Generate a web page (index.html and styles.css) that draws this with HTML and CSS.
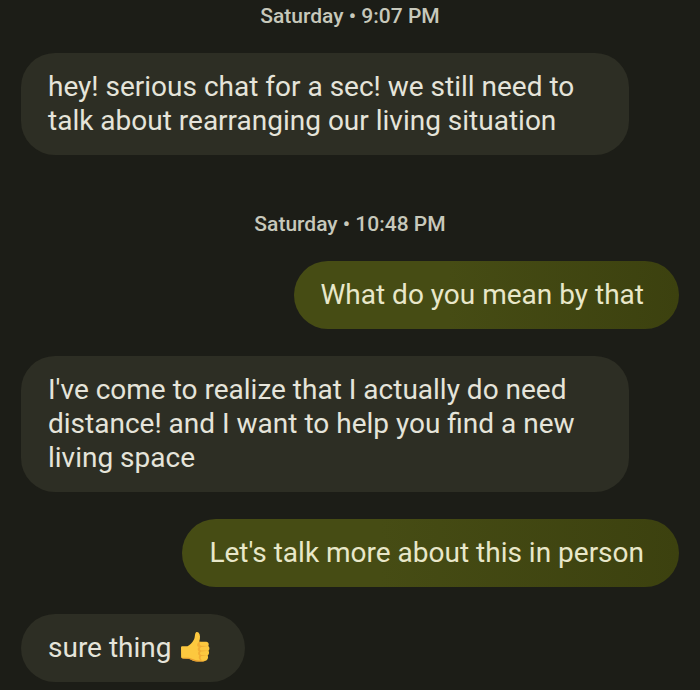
FILE: index.html
```html
<!DOCTYPE html>
<html lang="en">
<head>
    <meta charset="UTF-8">
    <meta name="viewport" content="width=device-width, initial-scale=1.0">
    <title>Messages</title>
    <link rel="stylesheet" href="styles.css">
</head>
<body>
    <main class="chat">
        <section class="thread">
            <h2 class="timestamp">Saturday • 9:07 PM</h2>
            <p class="bubble received">hey! serious chat for a sec! we still need to talk about rearranging our living situation</p>
        </section>
        <section class="thread">
            <h2 class="timestamp">Saturday • 10:48 PM</h2>
            <p class="bubble sent">What do you mean by that</p>
            <p class="bubble received">I've come to realize that I actually do need distance! and I want to help you find a new living space</p>
            <p class="bubble sent">Let's talk more about this in person</p>
            <p class="bubble received">sure thing
                <svg class="emoji" viewBox="0 0 30 32" role="img" aria-label="thumbs up">
                    <path fill="#fcc83f" d="M1 16.500C1 15.600 1.600 15.200 2.500 15.200L7.500 15.200C9.500 14.600 12.500 11.500 14 8.500C15 6.500 14.700 4.200 15.400 2.300C15.900 .8 17.400 .5 18.500 1.500C20.400 3.300 20.400 7 19.200 10.700L26.300 10.700C28.500 10.800 29.400 13.200 28.300 15C29.800 16.200 29.800 18.600 28.500 19.800C29.500 21.300 29.200 23.600 27.700 24.500C28.600 26.400 27.900 28.600 26.300 29.400C23.500 30.600 18.500 30.900 15 30.200C12.300 29.700 10.700 28.300 8.500 27.700L2.800 27.500C1.600 27.400 1.200 26.800 1.100 25.800Z"/>
                    <path fill="#f2ad33" d="M19.200 10.700C18 11.600 17 12.800 17.200 14.200C17.300 15.200 18 15.700 18.800 15.900C17.300 17 17.300 19.300 18.900 20.200C17.600 21.400 17.800 23.700 19.300 24.600C18.300 26 18.700 28.400 20.300 29.300L22.200 29.200C20.400 28.200 20 26.100 21.300 24.900L27.700 24.500L21.200 24C19.600 23 19.500 21.500 21 20.400L28.500 19.800L21 19.400C19.600 18.500 19.600 17 21 15.900L28.300 15L21 14.700C19.400 13.900 19.400 12.200 20.400 10.700Z"/>
                    <path fill="#e59a2f" d="M8.500 27.700C10.700 28.300 12.300 29.700 15 30.200C18.500 30.900 23.500 30.600 26.300 29.400C22.500 29.800 18 29.700 15.200 29C12.500 28.300 11 27.200 8.800 26.800L2 26.800L2.800 27.500Z"/>
                </svg>
            </p>
        </section>
    </main>
</body>
</html>
```

FILE: styles.css
```css
:root {
    --background: #1c1d17;
    --received: #2d2e24;
    --sent-start: #464c14;
    --sent-end: #3c410f;
    --text: #e5e4da;
    --muted: #c7c8bb;
}

* {
    margin: 0;
    padding: 0;
    box-sizing: border-box;
}

body {
    font-family: Roboto, sans-serif;
    background-color: var(--background);
    color: var(--text);
    min-height: 100vh;
}

.chat {
    display: flex;
    flex-direction: column;
    gap: 60px;
    padding: 7px 21px 8px;
}

.thread {
    display: flex;
    flex-direction: column;
    gap: 27px;
}

.timestamp {
    color: var(--muted);
    font-size: 21px;
    font-weight: 500;
    line-height: 19px;
    text-align: center;
}

.bubble {
    max-width: 608px;
    padding: 17px 35px 17px 27px;
    border-radius: 34px;
    font-size: 28px;
    line-height: 34px;
}

.received {
    align-self: flex-start;
    background-color: var(--received);
}

.sent {
    align-self: flex-end;
    background: linear-gradient(to right, var(--sent-start) 40%, var(--sent-end));
    color: #e8e7c9;
}

.emoji {
    width: 30px;
    height: 32px;
    margin-left: 2px;
    vertical-align: -6px;
}
```
